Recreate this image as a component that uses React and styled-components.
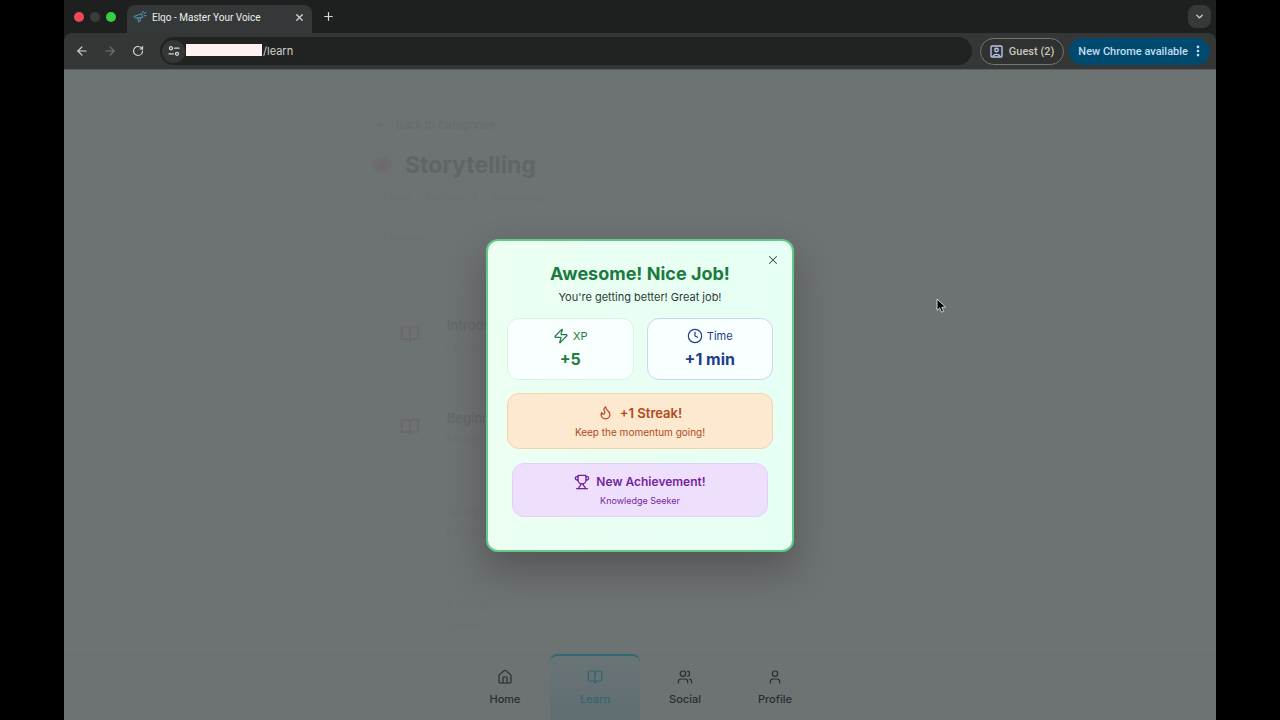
import React, { useState } from "react"
import styled, { createGlobalStyle, css } from "styled-components"
import {
  ArrowLeft,
  ArrowRight,
  BookOpen,
  ChevronDown,
  Clock,
  EllipsisVertical,
  Flame,
  House,
  Plus,
  RotateCw,
  Trophy,
  User,
  Users,
  X,
  Zap,
} from "lucide-react"

const GlobalStyle = createGlobalStyle`
  *, *::before, *::after {
    box-sizing: border-box;
  }
  body {
    margin: 0;
    background: #000;
    font-family: Inter, "Liberation Sans", sans-serif;
  }
  h1, h2, p, ul {
    margin: 0;
    padding: 0;
  }
  button, input {
    font: inherit;
    color: inherit;
  }
`

const lessons = [
  { title: "Introduction", text: "Lesson 1", top: true },
  { title: "Beginnings", text: "Lesson 2", top: true },
  { title: "Story", text: "Lesson 3" },
  { title: "Ending", text: "Lesson 4" },
]

const tabs = [
  { name: "Home", Icon: House },
  { name: "Learn", Icon: BookOpen },
  { name: "Social", Icon: Users },
  { name: "Profile", Icon: User },
]

const TabLogo = () => (
  <svg width="14" height="14" viewBox="0 0 14 14" fill="none" stroke="#4f9db5" strokeWidth="1" strokeLinecap="round" strokeLinejoin="round">
    <path d="M1.2 6.4 L8.3 3.8 L9.8 7.6 L3 8 Z" />
    <path d="M5 8.3 L5.4 11.8 L7.4 11 L7.2 8.2" />
    <path d="M9.6 3 L10.2 1.4 M10.8 4 L13 2.2 M11.3 5.8 L13 5.6" />
  </svg>
)

const SiteSettings = () => (
  <svg width="12" height="12" viewBox="0 0 12 12" fill="none" stroke="#d5d7d6" strokeWidth="1.3" strokeLinecap="round">
    <circle cx="3" cy="3.2" r="1.5" />
    <path d="M6.6 3.2 H11" />
    <circle cx="9" cy="8.8" r="1.5" />
    <path d="M1 8.8 H5.4" />
  </svg>
)

const GuestIcon = () => (
  <svg width="13" height="13" viewBox="0 0 13 13" fill="none" stroke="#b9c3ea" strokeWidth="1.4">
    <rect x="1" y="1" width="11" height="11" rx="1" />
    <circle cx="6.5" cy="5" r="1.7" />
    <path d="M3 11.5 C3.6 8.6 9.4 8.6 10 11.5" />
  </svg>
)

const Cursor = () => (
  <Pointer width="11" height="16" viewBox="0 0 11 16">
    <path d="M1 1 V12.4 L3.7 9.9 L5.5 14.2 L7.6 13.3 L5.8 9.2 L9.6 9 Z" fill="#000" stroke="#d6d6d6" strokeWidth="1" />
  </Pointer>
)

const App = () => {
  const [open, setOpen] = useState(true)
  const [active, setActive] = useState("Learn")

  return (
    <>
      <GlobalStyle />
      <Browser>
        <TabStrip>
          <Lights>
            <Light $color="#f0495a" />
            <Light $color="#3a3b3b" />
            <Light $color="#34cf45" />
          </Lights>
          <Tab>
            <TabLogo />
            <TabTitle>Elqo - Master Your Voice</TabTitle>
            <IconButton aria-label="Close tab" $size={14}><X size={11} strokeWidth={2.6} /></IconButton>
          </Tab>
          <IconButton aria-label="New tab" $size={20}><Plus size={13} strokeWidth={2.2} /></IconButton>
          <TabSearch aria-label="Search tabs"><ChevronDown size={11} strokeWidth={3} /></TabSearch>
        </TabStrip>
        <Toolbar>
          <IconButton aria-label="Back" $size={20}><ArrowLeft size={14} /></IconButton>
          <IconButton aria-label="Forward" $size={20} $faded><ArrowRight size={14} /></IconButton>
          <IconButton aria-label="Reload" $size={20}><RotateCw size={12} strokeWidth={2.4} /></IconButton>
          <AddressBar>
            <SiteButton aria-label="Site information"><SiteSettings /></SiteButton>
            <Redacted />
            <Address aria-label="Address" defaultValue="/learn" />
          </AddressBar>
          <GuestButton><GuestIcon />Guest (2)</GuestButton>
          <UpdateButton>New Chrome available<EllipsisVertical size={14} strokeWidth={2.6} /></UpdateButton>
        </Toolbar>
        <Page>
          <Course>
            <BackLink href="#categories"><ArrowLeft size={10} />Back to Categories</BackLink>
            <Heading>
              <Emblem />
              <CourseTitle>Storytelling</CourseTitle>
            </Heading>
            <Meta><span>Learn</span><span>the craft of</span><span>storytelling</span></Meta>
            <Progress>Lessons</Progress>
            <Lessons>
              {lessons.map((lesson) => (
                <Lesson key={lesson.title} $faint={!lesson.top}>
                  <LessonIcon>{lesson.top && <BookOpen size={20} />}</LessonIcon>
                  <div>
                    <LessonTitle>{lesson.title}</LessonTitle>
                    <LessonText>{lesson.text}</LessonText>
                  </div>
                </Lesson>
              ))}
            </Lessons>
          </Course>
          <BottomNav>
            {tabs.map(({ name, Icon }) => (
              <NavButton key={name} $active={name === active} onClick={() => setActive(name)}>
                <Icon size={16} strokeWidth={1.8} />
                {name}
              </NavButton>
            ))}
          </BottomNav>
          {open && (
            <Overlay>
              <Modal role="dialog" aria-labelledby="reward-title">
                <CloseButton aria-label="Close" onClick={() => setOpen(false)}>
                  <X size={14} strokeWidth={1.8} />
                </CloseButton>
                <ModalTitle id="reward-title">Awesome! Nice Job!</ModalTitle>
                <ModalText>You're getting better! Great job!</ModalText>
                <Stats>
                  <Stat $border="#d3f7e0" $color="#207a43">
                    <StatLabel><Zap size={16} strokeWidth={1.8} />XP</StatLabel>
                    <StatValue>+5</StatValue>
                  </Stat>
                  <Stat $border="#c5d8ee" $color="#203c8c">
                    <StatLabel><Clock size={16} strokeWidth={1.8} />Time</StatLabel>
                    <StatValue>+1 min</StatValue>
                  </Stat>
                </Stats>
                <Banner $bg="#fde8d0" $border="#f3d3ae" $color="#b04a1c">
                  <BannerTitle $gap={7}><Flame size={15} />+1 Streak!</BannerTitle>
                  <BannerText>Keep the momentum going!</BannerText>
                </Banner>
                <Banner $bg="#eee0fd" $border="#e2d0f8" $color="#741fa0" $inset>
                  <BannerTitle $gap={6} $small><Trophy size={16} />New Achievement!</BannerTitle>
                  <BannerText $small>Knowledge Seeker</BannerText>
                </Banner>
              </Modal>
            </Overlay>
          )}
          <Cursor />
        </Page>
      </Browser>
    </>
  )
}

const Browser = styled.div`
  display: flex;
  flex-direction: column;
  width: 90%;
  min-height: 100vh;
  margin: 0 auto;
  background: #1e1f1f;
`

const TabStrip = styled.div`
  display: flex;
  align-items: center;
  height: 33px;
  padding: 0 5px 0 10px;
  color: #d9dbda;
`

const Lights = styled.div`
  display: flex;
  gap: 6px;
  margin-right: 11px;
`

const Light = styled.span`
  width: 10px;
  height: 10px;
  border-radius: 50%;
  background: ${({ $color }) => $color};
`

const Tab = styled.div`
  display: flex;
  align-items: center;
  align-self: flex-end;
  gap: 5px;
  width: 185px;
  height: 28px;
  margin-right: 6px;
  padding: 0 6px 4px;
  border-radius: 8px 8px 0 0;
  background: #353838;
`

const TabTitle = styled.span`
  flex: 1;
  font-family: Roboto, sans-serif;
  font-size: 10px;
  white-space: nowrap;
  color: #eceeed;
`

const IconButton = styled.button`
  display: flex;
  align-items: center;
  justify-content: center;
  width: ${({ $size }) => $size}px;
  height: ${({ $size }) => $size}px;
  padding: 0;
  border: 0;
  background: none;
  color: ${({ $faded }) => ($faded ? "#727575" : "#d5d7d6")};
`

const TabSearch = styled(IconButton)`
  width: 23px;
  height: 23px;
  margin-left: auto;
  border-radius: 8px;
  background: #373838;
`

const Toolbar = styled.div`
  display: flex;
  align-items: center;
  gap: 8px;
  height: 37px;
  padding: 0 6px 0 8px;
  border-bottom: 1px solid #5a5d5d;
  border-radius: 8px 8px 0 0;
  background: #353737;
`

const AddressBar = styled.div`
  display: flex;
  flex: 1;
  align-items: center;
  height: 28px;
  margin-left: 4px;
  padding-left: 2px;
  border-radius: 14px;
  background: #212323;
`

const SiteButton = styled.button`
  display: flex;
  align-items: center;
  justify-content: center;
  width: 23px;
  height: 23px;
  padding: 0;
  border: 0;
  border-radius: 50%;
  background: #353737;
`

const Redacted = styled.span`
  width: 76px;
  height: 12px;
  margin: 0 0 2px 1px;
  background: #fff2ee;
`

const Address = styled.input`
  flex: 1;
  min-width: 0;
  padding: 0 1px;
  border: 0;
  outline: 0;
  background: none;
  font-size: 11px;
  color: #d0d2c8;
`

const pill = css`
  display: flex;
  align-items: center;
  height: 27px;
  border-radius: 14px;
  font-family: Roboto, sans-serif;
  font-size: 11px;
  font-weight: 500;
  white-space: nowrap;
`

const GuestButton = styled.button`
  ${pill}
  gap: 6px;
  padding: 0 9px;
  border: 1px solid #757774;
  background: #303232;
  color: #c9c7bb;
`

const UpdateButton = styled.button`
  ${pill}
  gap: 3px;
  margin-left: -3px;
  padding: 0 5px 0 9px;
  border: 0;
  background: #004a70;
  color: #c3dfee;
`

const Page = styled.main`
  position: relative;
  display: flex;
  flex: 1;
  flex-direction: column;
  background: #6d7273;
`

const Course = styled.section`
  flex: 1;
  width: 100%;
  max-width: 536px;
  margin: 0 auto;
  padding-top: 46px;
`

const BackLink = styled.a`
  display: flex;
  align-items: center;
  gap: 10px;
  padding-left: 4px;
  font-size: 11px;
  line-height: 18px;
  color: #666c6d;
  text-decoration: none;
`

const Heading = styled.div`
  display: flex;
  align-items: center;
  gap: 13px;
  margin-top: 16px;
`

const Emblem = styled.span`
  width: 20px;
  height: 16px;
  border-radius: 8px;
  background: radial-gradient(#6e676a, #6d7273);
`

const CourseTitle = styled.h1`
  font-size: 23px;
  line-height: 30px;
  color: #606566;
`

const Meta = styled.div`
  display: flex;
  gap: 14px;
  margin-top: 8px;
  padding-left: 12px;
  font-size: 10px;
  line-height: 18px;
  color: #6a7071;
`

const Progress = styled.div`
  margin-top: 22px;
  padding-left: 12px;
  font-size: 10px;
  line-height: 18px;
  color: #6b7071;
`

const Lessons = styled.ul`
  display: grid;
  gap: 55px;
  margin-top: 70px;
  list-style: none;
`

const Lesson = styled.li`
  display: flex;
  gap: 24px;
  padding-left: 28px;
  color: ${({ $faint }) => ($faint ? "#6b7071" : "#636869")};
`

const LessonIcon = styled.div`
  width: 23px;
  padding-top: 8px;
  color: #6c6768;
`

const LessonTitle = styled.p`
  font-size: 13px;
  font-weight: 500;
  line-height: 18px;
`

const LessonText = styled.p`
  margin-top: 4px;
  font-size: 10px;
  line-height: 16px;
  color: #6b7071;
`

const BottomNav = styled.nav`
  display: flex;
  justify-content: center;
  border-top: 1px solid #667072;
`

const NavButton = styled.button`
  display: flex;
  flex-direction: column;
  align-items: center;
  gap: 6px;
  width: 90px;
  height: 66px;
  margin-top: -1px;
  padding: 13px 0 0;
  border: 0;
  border-top: 2px solid ${({ $active }) => ($active ? "#306874" : "transparent")};
  border-radius: 8px 8px 0 0;
  background: ${({ $active }) => ($active ? "linear-gradient(#697476, #606d71)" : "none")};
  color: ${({ $active }) => ($active ? "#2f6671" : "#282d31")};
  font-size: 11px;
  font-weight: 500;
  line-height: 16px;
`

const Overlay = styled.div`
  position: absolute;
  inset: 0;
  display: flex;
  align-items: center;
  justify-content: center;
`

const Modal = styled.section`
  position: relative;
  width: 308px;
  padding: 20px 19px 33px;
  border: 2px solid #62ca87;
  border-radius: 12px;
  background: linear-gradient(90deg, #ecfff2, #e6fff4);
  box-shadow: 0 18px 36px rgba(50, 40, 40, 0.38);
  text-align: center;
`

const CloseButton = styled.button`
  position: absolute;
  top: 12px;
  right: 12px;
  display: flex;
  padding: 0;
  border: 0;
  background: none;
  color: #45504a;
`

const ModalTitle = styled.h2`
  font-size: 18px;
  line-height: 26px;
  color: #1b7a3d;
`

const ModalText = styled.p`
  margin-top: 1px;
  font-size: 11px;
  line-height: 18px;
  color: #2c3b35;
`

const Stats = styled.div`
  display: grid;
  grid-template-columns: 1fr 1fr;
  gap: 13px;
  margin: 12px 0 13px;
`

const Stat = styled.div`
  height: 62px;
  padding-top: 8px;
  border: 1px solid ${({ $border }) => $border};
  border-radius: 12px;
  background: #f9fffe;
  color: ${({ $color }) => $color};
`

const StatLabel = styled.div`
  display: flex;
  align-items: center;
  justify-content: center;
  gap: 4px;
  font-size: 11px;
  line-height: 18px;
`

const StatValue = styled.div`
  font-size: 16px;
  font-weight: 700;
  line-height: 28px;
`

const Banner = styled.div`
  height: ${({ $inset }) => ($inset ? 54 : 56)}px;
  margin: ${({ $inset }) => ($inset ? "14px 5px 0" : "0")};
  padding-top: ${({ $inset }) => ($inset ? 8 : 9)}px;
  border: 1px solid ${({ $border }) => $border};
  border-radius: 12px;
  background: ${({ $bg }) => $bg};
  color: ${({ $color }) => $color};
`

const BannerTitle = styled.div`
  display: flex;
  align-items: center;
  justify-content: center;
  gap: ${({ $gap }) => $gap}px;
  font-size: ${({ $small }) => ($small ? 12 : 13)}px;
  font-weight: 600;
  line-height: 20px;
`

const BannerText = styled.p`
  font-size: ${({ $small }) => ($small ? 9 : 10)}px;
  line-height: 18px;
`

const Pointer = styled.svg`
  position: absolute;
  top: 228px;
  left: 872px;
  pointer-events: none;
`

export default App
